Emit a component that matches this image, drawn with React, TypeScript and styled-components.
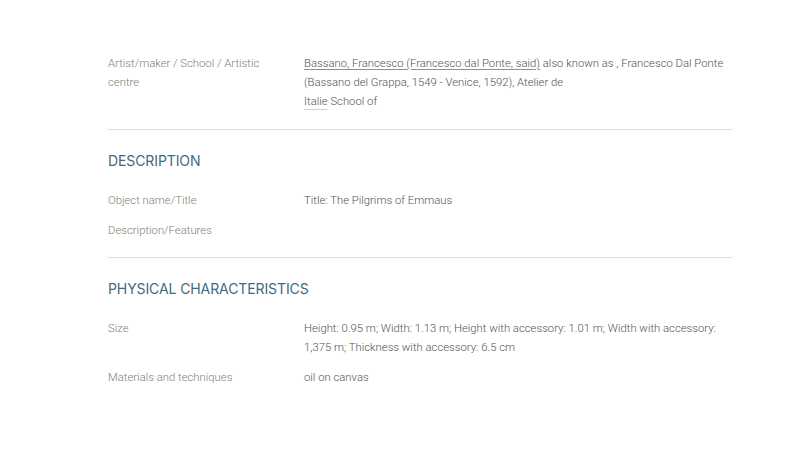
import styled, { createGlobalStyle } from "styled-components";

interface Row {
  label: string;
  value?: React.ReactNode;
}

interface Section {
  title?: string;
  rows: Row[];
}

const GlobalStyle = createGlobalStyle`
  body {
    margin: 0;
    background: #ffffff;
    font-family: Roboto, "Liberation Sans", sans-serif;
  }
`;

const Page = styled.main`
  width: 624px;
  margin: 0 0 0 108px;
  padding-top: 34px;
`;

const Block = styled.section<{ $last?: boolean; $titled?: boolean }>`
  padding: ${(p) => (p.$titled ? "21px" : "20px")} 0
    ${(p) => (p.$last ? "0" : p.$titled ? "16.5px" : "17.5px")};
  border-bottom: ${(p) => (p.$last ? "none" : "1px solid #d9dfe3")};
`;

const Heading = styled.h2`
  margin: 0 0 20.5px;
  font-family: Inter, "Noto Sans", sans-serif;
  font-size: 14px;
  line-height: 20px;
  font-weight: 400;
  color: #3d6b83;
  letter-spacing: -0.1px;
`;

const List = styled.dl`
  margin: 0;
  display: flex;
  flex-direction: column;
  gap: 11px;
`;

const Line = styled.div`
  display: grid;
  grid-template-columns: 196px 1fr;
  font-size: 11.3px;
  line-height: 19px;
  font-weight: 300;
`;

const Label = styled.dt`
  color: #877d70;
  padding-right: 30px;
`;

const Value = styled.dd`
  margin: 0;
  color: #5a524a;
`;

const Link = styled.a<{ $faint?: boolean }>`
  color: inherit;
  text-decoration: underline;
  text-decoration-color: ${(p) => (p.$faint ? "#d2d2d2" : "#8f8f8f")};
  text-underline-offset: ${(p) => (p.$faint ? "4px" : "2px")};
  text-decoration-thickness: 1px;
`;

const sections: Section[] = [
  {
    rows: [
      {
        label: "Artist/maker / School / Artistic centre",
        value: (
          <>
            <Link>Bassano, Francesco (Francesco dal Ponte, said)</Link> also
            known as , Francesco Dal Ponte (Bassano del Grappa, 1549 - Venice,
            1592), Atelier de
            <br />
            <Link $faint>Italie</Link> School of
          </>
        ),
      },
    ],
  },
  {
    title: "DESCRIPTION",
    rows: [
      { label: "Object name/Title", value: "Title: The Pilgrims of Emmaus" },
      { label: "Description/Features" },
    ],
  },
  {
    title: "PHYSICAL CHARACTERISTICS",
    rows: [
      {
        label: "Size",
        value:
          "Height: 0.95 m; Width: 1.13 m; Height with accessory: 1.01 m; Width with accessory: 1,375 m; Thickness with accessory: 6.5 cm",
      },
      { label: "Materials and techniques", value: "oil on canvas" },
    ],
  },
];

export default function App() {
  return (
    <>
      <GlobalStyle />
      <Page>
        {sections.map((s, i) => (
          <Block
            key={i}
            $titled={!!s.title}
            $last={i === sections.length - 1}
          >
            {s.title && <Heading>{s.title}</Heading>}
            <List>
              {s.rows.map((r) => (
                <Line key={r.label}>
                  <Label>{r.label}</Label>
                  <Value>{r.value}</Value>
                </Line>
              ))}
            </List>
          </Block>
        ))}
      </Page>
    </>
  );
}
